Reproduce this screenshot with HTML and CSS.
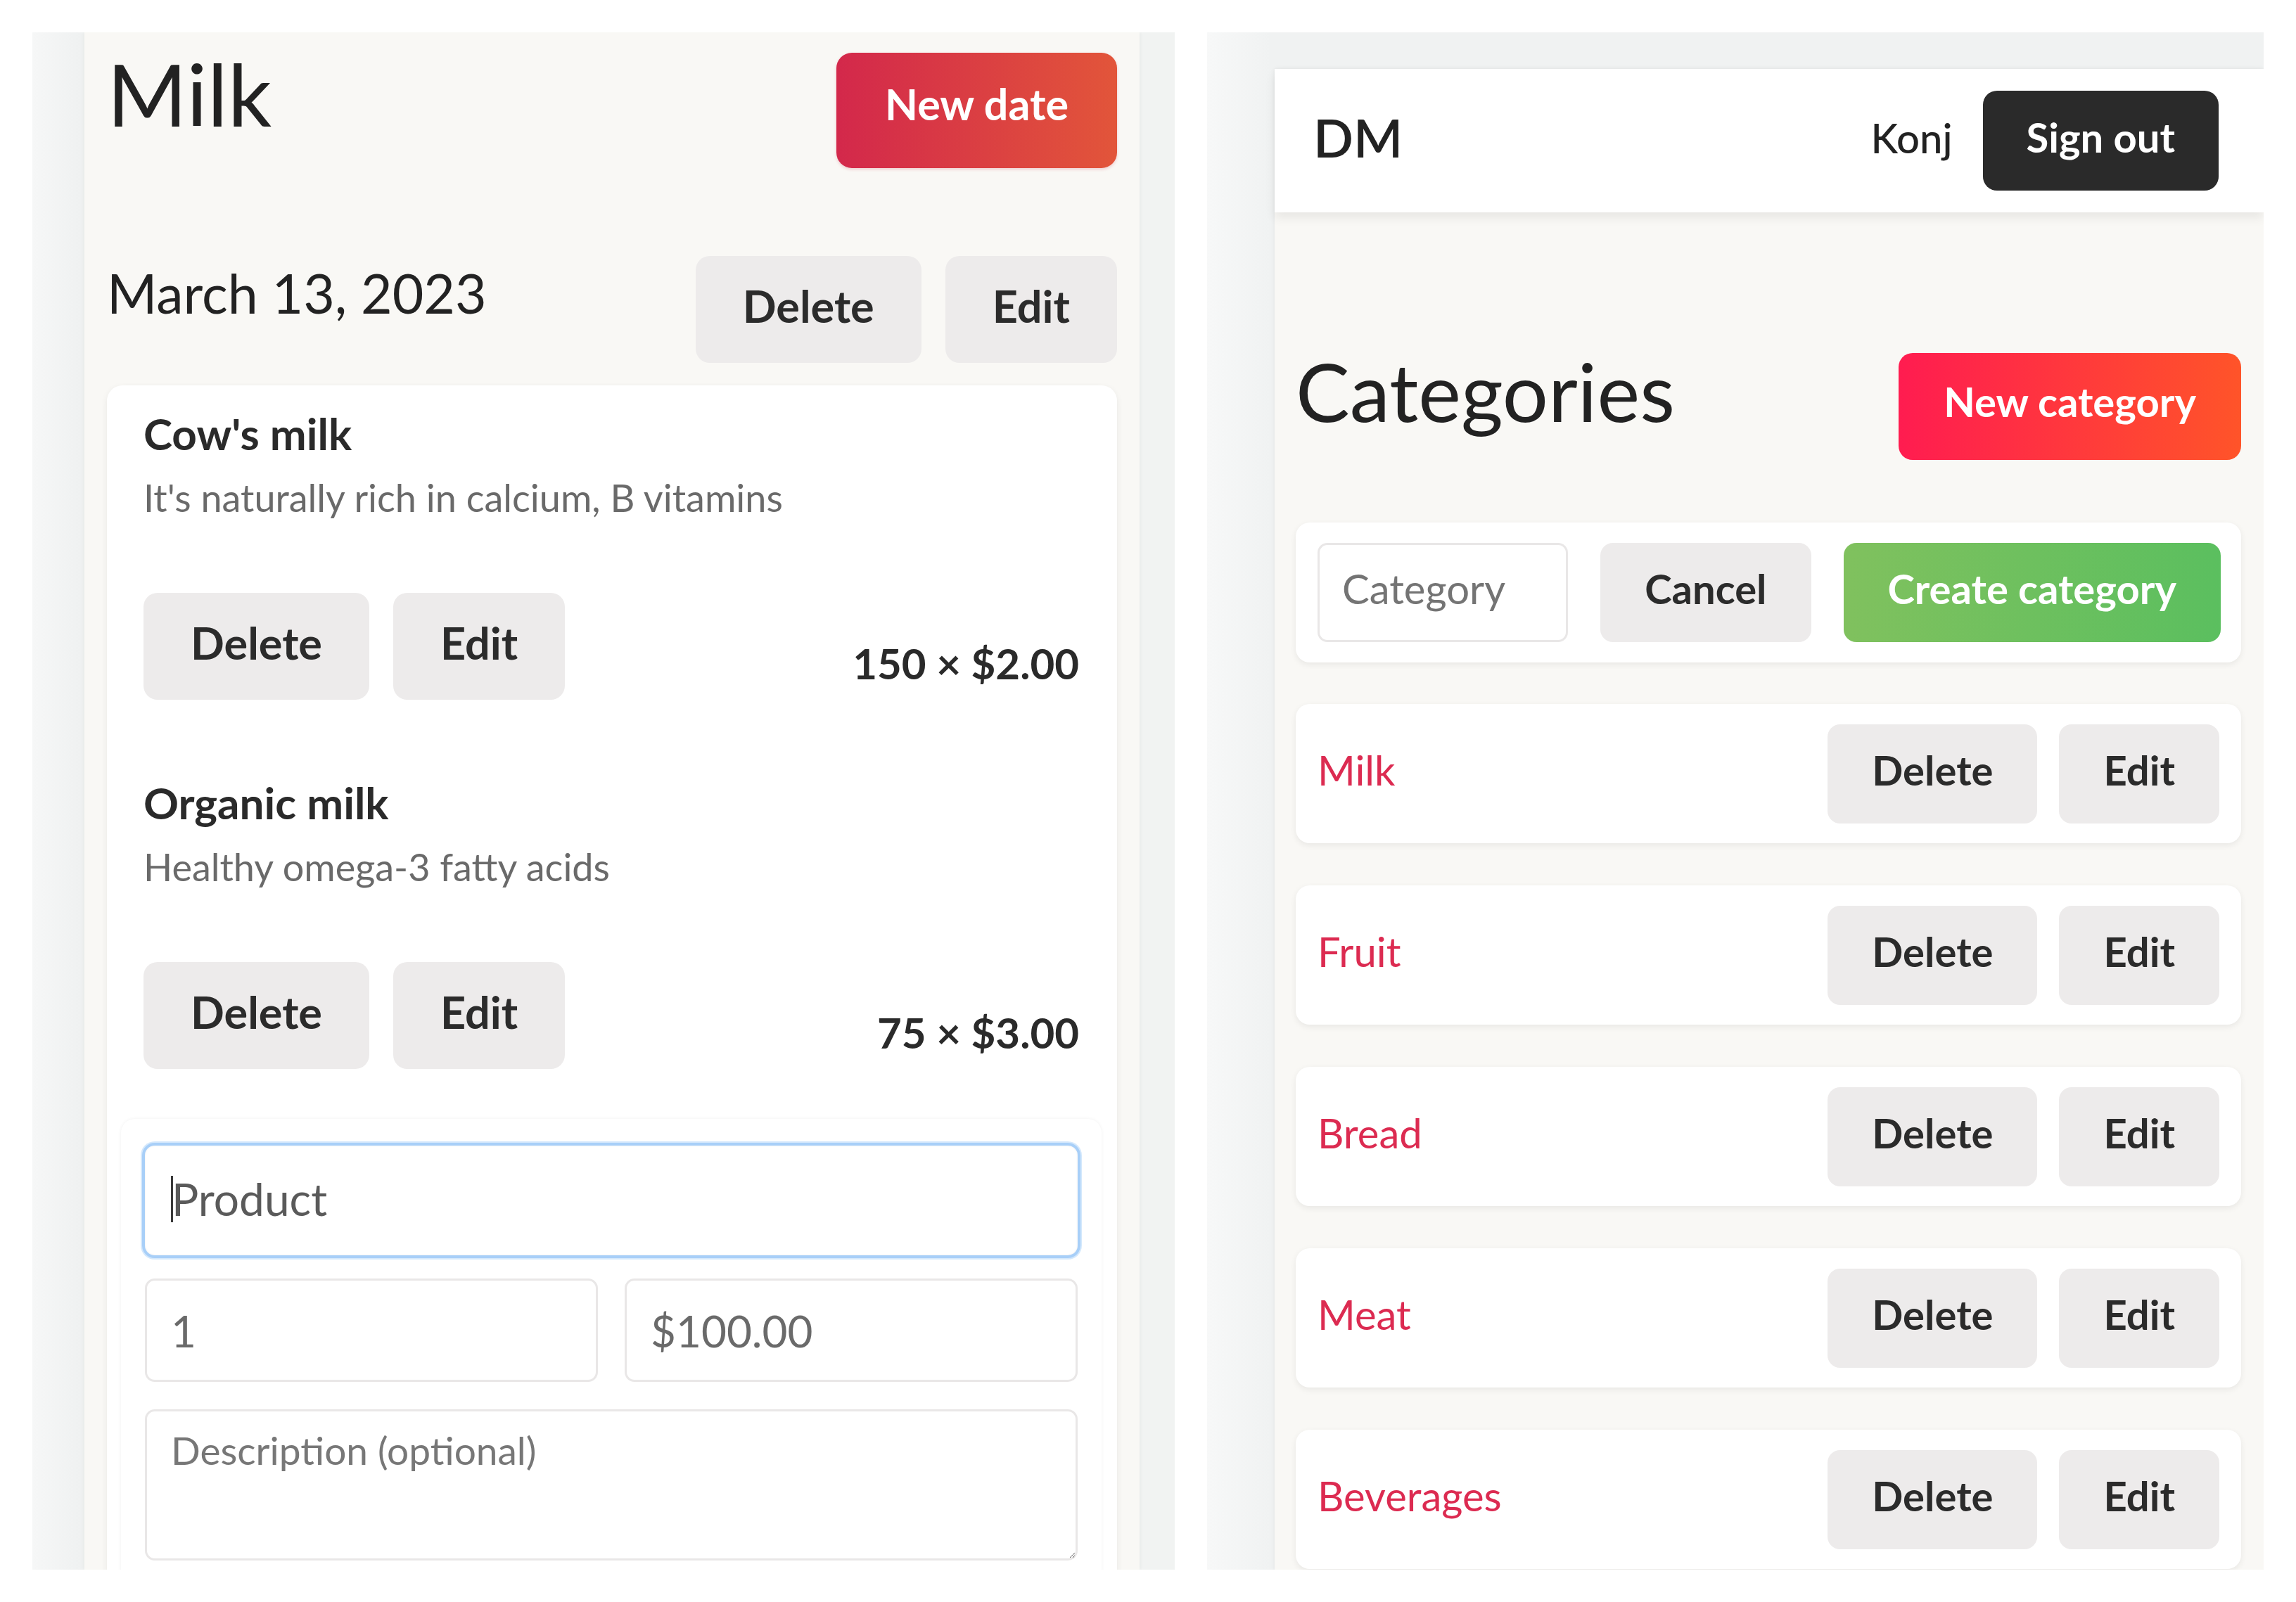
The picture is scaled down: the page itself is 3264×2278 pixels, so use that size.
FILE: index.html
```html
<!DOCTYPE html>
<html lang="en">
<head>
<meta charset="utf-8">
<title>Milk / Categories</title>
<link rel="stylesheet" href="styles.css">
</head>
<body>
<div class="page">
  <section class="phone phone-left">
    <div class="screen screen-left">
      <header class="page-head">
        <h1 class="title">Milk</h1>
        <button class="btn btn-red btn-new-date">New date</button>
      </header>
      <div class="date-row">
        <h2 class="date">March 13, 2023</h2>
        <div class="actions actions-l">
          <button class="btn btn-grey btn-l">Delete</button>
          <button class="btn btn-grey btn-l">Edit</button>
        </div>
      </div>
      <div class="card products">
        <div class="product">
          <h3 class="product-name">Cow's milk</h3>
          <p class="product-desc">It's naturally rich in calcium, B vitamins</p>
          <div class="product-row">
            <div class="actions actions-l">
              <button class="btn btn-grey btn-l">Delete</button>
              <button class="btn btn-grey btn-l">Edit</button>
            </div>
            <span class="price">150 × $2.00</span>
          </div>
        </div>
        <div class="product product-next">
          <h3 class="product-name">Organic milk</h3>
          <p class="product-desc">Healthy omega-3 fatty acids</p>
          <div class="product-row">
            <div class="actions actions-l">
              <button class="btn btn-grey btn-l">Delete</button>
              <button class="btn btn-grey btn-l">Edit</button>
            </div>
            <span class="price">75 × $3.00</span>
          </div>
        </div>
        <form class="product-form">
          <div class="focus-wrap">
            <input class="input input-product" type="text" placeholder="Product">
          </div>
          <div class="form-row">
            <input class="input input-small" type="text" placeholder="1">
            <input class="input input-small" type="text" placeholder="$100.00">
          </div>
          <textarea class="input textarea" placeholder="Description (optional)"></textarea>
        </form>
      </div>
    </div>
  </section>

  <section class="phone phone-right">
    <div class="screen screen-right">
      <nav class="navbar">
        <span class="brand">DM</span>
        <div class="nav-right">
          <span class="user">Konj</span>
          <button class="btn btn-dark">Sign out</button>
        </div>
      </nav>
      <main class="cat-main">
        <header class="cat-head">
          <h1 class="title title-cat">Categories</h1>
          <button class="btn btn-hot btn-new-cat">New category</button>
        </header>
        <div class="card cat-form">
          <input class="input input-cat" type="text" placeholder="Category">
          <button class="btn btn-grey btn-r">Cancel</button>
          <button class="btn btn-green btn-r">Create category</button>
        </div>
        <ul class="cat-list">
          <li class="card cat-item">
            <span class="cat-name">Milk</span>
            <div class="actions actions-r">
              <button class="btn btn-grey btn-r">Delete</button>
              <button class="btn btn-grey btn-r">Edit</button>
            </div>
          </li>
          <li class="card cat-item">
            <span class="cat-name">Fruit</span>
            <div class="actions actions-r">
              <button class="btn btn-grey btn-r">Delete</button>
              <button class="btn btn-grey btn-r">Edit</button>
            </div>
          </li>
          <li class="card cat-item">
            <span class="cat-name">Bread</span>
            <div class="actions actions-r">
              <button class="btn btn-grey btn-r">Delete</button>
              <button class="btn btn-grey btn-r">Edit</button>
            </div>
          </li>
          <li class="card cat-item">
            <span class="cat-name">Meat</span>
            <div class="actions actions-r">
              <button class="btn btn-grey btn-r">Delete</button>
              <button class="btn btn-grey btn-r">Edit</button>
            </div>
          </li>
          <li class="card cat-item">
            <span class="cat-name">Beverages</span>
            <div class="actions actions-r">
              <button class="btn btn-grey btn-r">Delete</button>
              <button class="btn btn-grey btn-r">Edit</button>
            </div>
          </li>
        </ul>
      </main>
    </div>
  </section>
</div>
</body>
</html>
```

FILE: styles.css
```css
* { box-sizing: border-box; }

html, body {
  margin: 0;
  padding: 0;
  background: #ffffff;
}

body {
  font-family: "Lato", "Open Sans", sans-serif;
  color: #222222;
}

button, input, textarea {
  font-family: inherit;
  margin: 0;
}

.page {
  display: flex;
  align-items: flex-start;
  gap: 46px;
  padding: 46px 0 0 46px;
}

.phone {
  height: 2186px;
  overflow: hidden;
  background: #f2f4f3;
  display: flex;
}

.phone-left {
  width: 1624px;
  padding: 0 50px 0 74px;
  background: linear-gradient(90deg, #f6f7f7 0px, #eff1f1 70px, #f1f3f2 74px, #f1f3f2 100%);
}

.phone-right {
  width: 1502px;
  padding: 52px 0 0 96px;
  background: linear-gradient(90deg, #f7f8f8 0px, #f0f2f2 92px);
}

.screen {
  background: #f9f8f5;
  box-shadow: 0 0 6px rgba(0, 0, 0, 0.07);
}

.screen-left {
  width: 1500px;
  height: 100%;
  padding: 15px 32px 0;
}

.screen-right {
  width: 1406px;
  height: 100%;
}

/* ---------- generic buttons ---------- */
.btn {
  border: none;
  font-weight: 700;
  color: #2b2b2b;
  white-space: nowrap;
  cursor: pointer;
}

.btn-grey { background: #edebeb; }

.btn-red {
  background: linear-gradient(90deg, #d3284b 0%, #e2553a 100%);
  color: #ffffff;
  box-shadow: 0 2px 4px rgba(200, 40, 60, 0.2);
}

.btn-hot {
  background: linear-gradient(90deg, #ff1c50 0%, #ff5429 100%);
  color: #ffffff;
}

.btn-green {
  background: linear-gradient(90deg, #80c15e 0%, #5bbf5f 100%);
  color: #ffffff;
}

.btn-dark {
  background: #2a2a2a;
  color: #ffffff;
}

.actions {
  display: flex;
}

/* ---------- left phone ---------- */
.page-head {
  display: flex;
  justify-content: space-between;
  align-items: flex-start;
}

.title {
  margin: 0;
  font-weight: 400;
  font-size: 123px;
  line-height: 144px;
  color: #222222;
}

.btn-new-date {
  margin-top: 14px;
  height: 164px;
  padding: 0 69px 20px;
  font-size: 61px;
  border-radius: 22px;
}

.date-row {
  margin-top: 125px;
  display: flex;
  justify-content: space-between;
  align-items: flex-start;
}

.date {
  margin: 4px 0 0;
  font-weight: 400;
  font-size: 77px;
  line-height: 96px;
  color: #222222;
}

.actions-l { gap: 34px; }

.btn-l {
  height: 152px;
  padding: 0 67px 12px;
  font-size: 63px;
  border-radius: 20px;
}

.card {
  background: #ffffff;
  border-radius: 22px;
  box-shadow: 0 3px 10px rgba(0, 0, 0, 0.07);
}

.products {
  margin-top: 32px;
  padding: 30px 54px 0 52px;
  height: 1800px;
}

.product-name {
  margin: 0;
  font-size: 62px;
  line-height: 77px;
  font-weight: 700;
  color: #2a2a2a;
}

.product-desc {
  margin: 22px 0 0;
  font-size: 54px;
  line-height: 62px;
  color: #6a6a6a;
}

.product-row {
  margin-top: 104px;
  display: flex;
  justify-content: space-between;
  align-items: flex-end;
}

.price {
  font-size: 60px;
  line-height: 77px;
  font-weight: 700;
  color: #2a2a2a;
  margin-bottom: 13px;
}

.product-next { margin-top: 108px; }

.product-form {
  margin: 71px -32px 0;
  padding: 34px 34px 40px;
  background: #ffffff;
  border-radius: 20px;
  box-shadow: 0 0 5px rgba(0, 0, 0, 0.06);
}

.input {
  display: block;
  width: 100%;
  background: #ffffff;
  border: 3px solid #e9e7e7;
  border-radius: 14px;
  color: #555555;
  outline: none;
}

.input::placeholder { color: #666666; opacity: 1; }

.focus-wrap {
  position: relative;
  margin: 0 -4px;
}

.focus-wrap::before {
  content: "";
  position: absolute;
  left: 41px;
  top: 47px;
  width: 3px;
  height: 66px;
  background: #3a3a3a;
}

.input-product {
  height: 164px;
  padding: 0 0 6px 38px;
  font-size: 64px;
  border-color: #a8cff8;
  border-width: 4px;
  border-radius: 18px;
  box-shadow: 0 0 0 2px rgba(170, 210, 250, 0.5), inset 0 0 3px rgba(0, 0, 0, 0.08);
}

.input-product::placeholder { color: #5a5a5a; }

.form-row {
  margin-top: 29px;
  display: flex;
  gap: 38px;
}

.input-small {
  flex: 1;
  height: 147px;
  padding: 0 0 0 34px;
  font-size: 62px;
}

.input-small::placeholder { color: #6a6a6a; }

.textarea {
  margin-top: 39px;
  height: 215px;
  padding: 22px 34px;
  font-size: 55px;
  line-height: 66px;
  resize: vertical;
}

.textarea::placeholder { color: #777777; }

/* ---------- right phone ---------- */
.navbar {
  position: relative;
  z-index: 1;
  height: 204px;
  background: #ffffff;
  display: flex;
  justify-content: space-between;
  align-items: center;
  padding: 0 64px 0 55px;
  box-shadow: 0 8px 14px rgba(0, 0, 0, 0.07);
}

.brand {
  font-size: 75px;
  font-weight: 600;
  color: #222222;
  padding-bottom: 10px;
}

.nav-right {
  display: flex;
  align-items: center;
  gap: 43px;
}

.user {
  font-size: 58px;
  font-weight: 500;
  color: #222222;
  padding-bottom: 10px;
}

.btn-dark {
  height: 142px;
  padding: 0 62px 12px;
  font-size: 58px;
  border-radius: 20px;
}

.cat-main {
  padding: 0 32px 0 30px;
}

.cat-head {
  margin-top: 185px;
  display: flex;
  justify-content: space-between;
  align-items: flex-start;
}

.title-cat {
  font-size: 115px;
  line-height: 137px;
}

.btn-new-cat {
  margin-top: 15px;
  height: 152px;
  padding: 0 64px 16px;
  font-size: 58px;
  border-radius: 20px;
}

.cat-form {
  margin-top: 89px;
  height: 199px;
  padding: 29px 29px 29px 31px;
  display: flex;
  gap: 46px;
  border-radius: 20px;
}

.input-cat {
  flex: 1;
  min-width: 0;
  height: 141px;
  padding: 0 0 12px 32px;
  font-size: 58px;
}

.input-cat::placeholder { color: #747474; }

.btn-r {
  height: 141px;
  padding: 0 63px 12px;
  font-size: 58px;
  border-radius: 18px;
}

.cat-list {
  list-style: none;
  margin: 59px 0 0;
  padding: 0;
  display: flex;
  flex-direction: column;
  gap: 60px;
}

.cat-item {
  height: 198px;
  padding: 0 31px;
  display: flex;
  justify-content: space-between;
  align-items: center;
  border-radius: 20px;
}

.cat-name {
  font-size: 58px;
  color: #dc2b51;
  padding-bottom: 12px;
}

.actions-r { gap: 31px; }
```
